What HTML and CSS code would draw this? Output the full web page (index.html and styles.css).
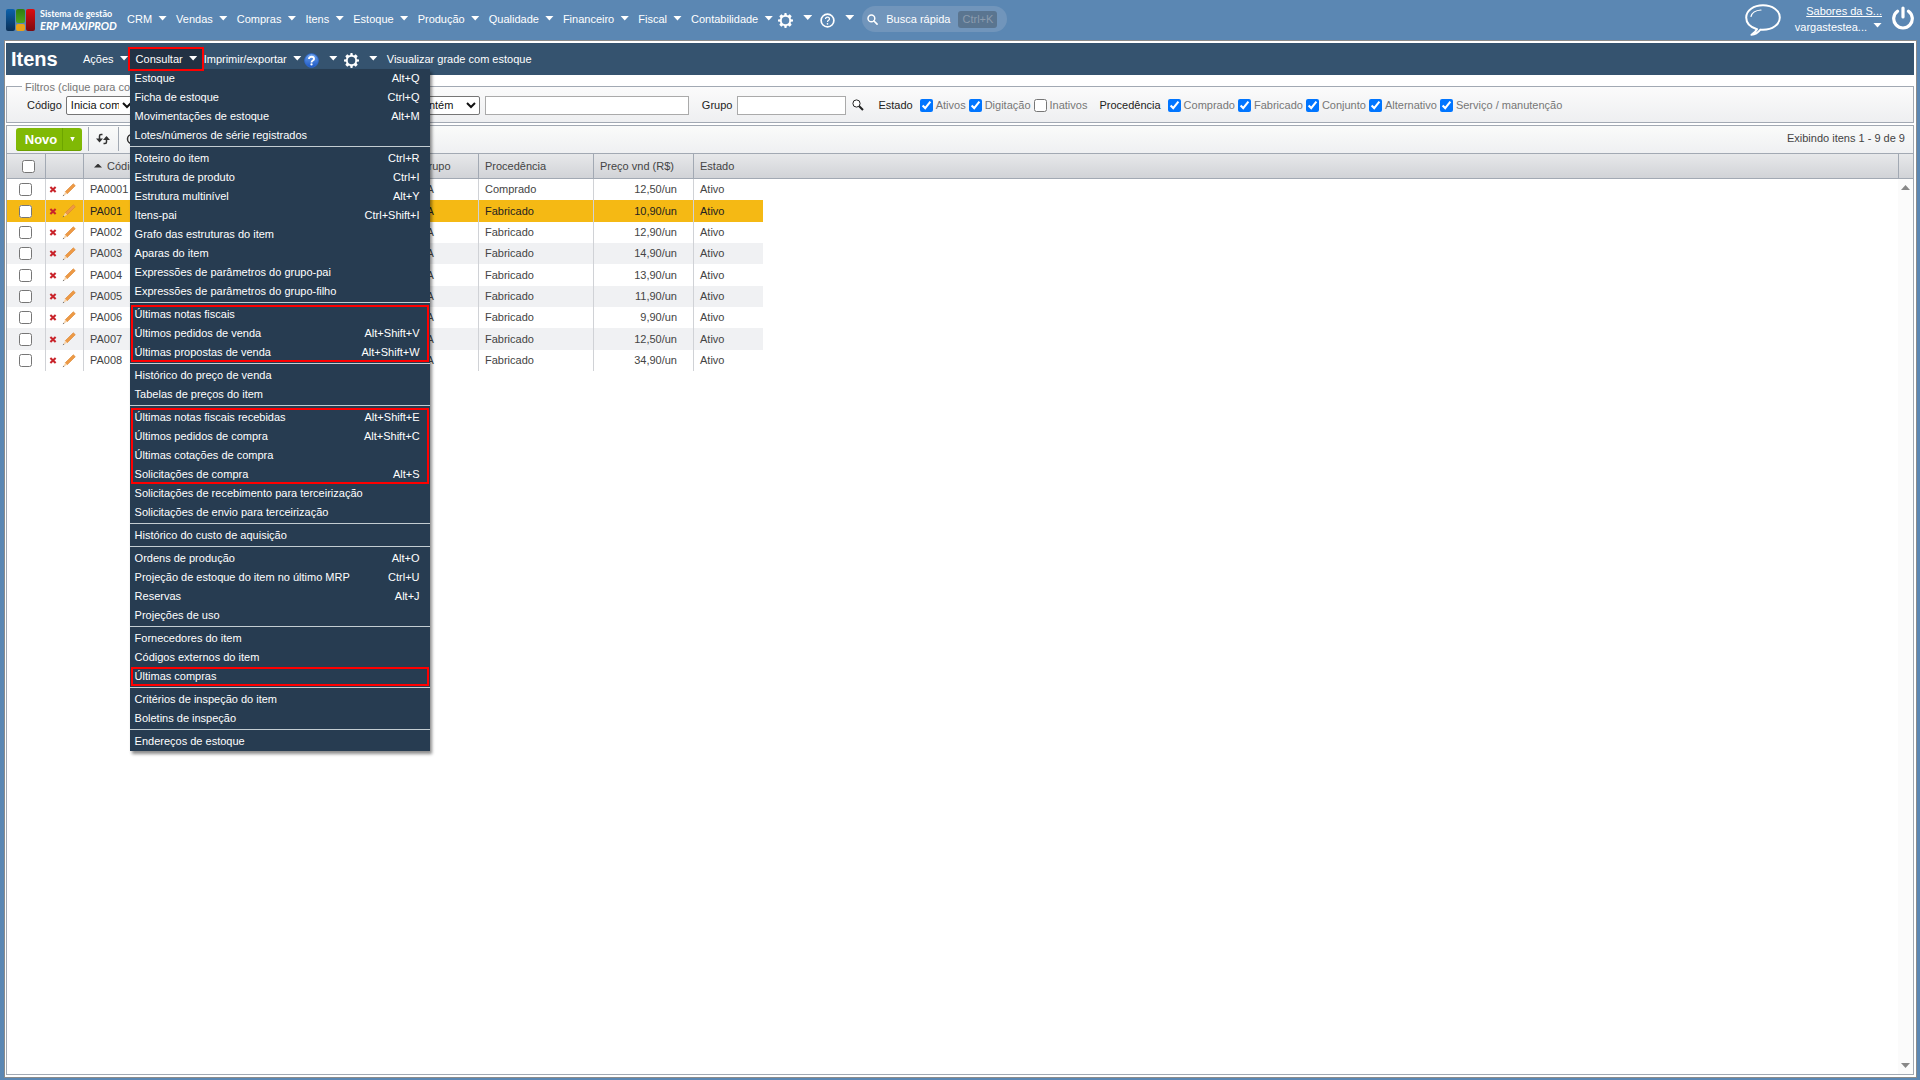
FILE: index.html
```html
<!DOCTYPE html>
<html lang="pt-BR">
<head>
<meta charset="utf-8">
<meta name="viewport" content="width=device-width, initial-scale=1">
<title>Itens - ERP MAXIPROD</title>
<link rel="stylesheet" href="styles.css">
</head>
<body>
<svg class="sprite" aria-hidden="true">
  <symbol id="gear" viewBox="0 0 16 16">
    <path fill="currentColor" fill-rule="evenodd" d="M7 0h2l.4 2.1 1.3.5L12.500 1.400l2.100 2.100-1.200 1.800.5 1.300L16 7v2l-2.100.4-.5 1.300 1.200 1.800-2.100 2.100-1.800-1.200-1.300.5L9 16H7l-.4-2.100-1.300-.5-1.800 1.200-2.100-2.100 1.200-1.800-.5-1.300L0 9V7l2.100-.4.5-1.300L1.400 3.500l2.100-2.100 1.800 1.200 1.300-.5zM8 4a4 4 0 1 0 0 8 4 4 0 0 0 0-8z"/>
  </symbol>
  <symbol id="delete" viewBox="0 0 8 8">
    <path stroke="#c9242b" stroke-width="2.400" d="M1 1.200l6 5.600M7 1.200L1 6.800"/>
  </symbol>
  <symbol id="pencil" viewBox="0 0 14 14">
    <path fill="#ee9a45" stroke="#d98331" stroke-width=".6" d="M11.300.8L3.200 8.800l2 2L13.300 2.700z"/>
    <path fill="#f6d2a8" d="M3.200 8.800L1 13l4.200-2.200z"/>
    <path fill="#555" d="M1.600 11.700L.7 13.300l1.700-.8z"/>
  </symbol>
</svg>

<header class="topbar">
  <a class="brand" href="#">
    <svg class="brand-mark" viewBox="0 0 30 22" aria-hidden="true">
      <defs>
        <linearGradient id="lb" x2="0" y2="1"><stop stop-color="#0b62ad"/><stop offset="1" stop-color="#0a2f57"/></linearGradient>
        <linearGradient id="lg" x2="0" y2="1"><stop stop-color="#2f7d12"/><stop offset="1" stop-color="#4ba51c"/></linearGradient>
        <linearGradient id="lr" x2="0" y2="1"><stop stop-color="#dd0c10"/><stop offset="1" stop-color="#7c0a10"/></linearGradient>
      </defs>
      <rect width="9" height="22" rx="2" fill="url(#lb)"/>
      <rect x="10" width="9" height="14" rx="2" fill="url(#lg)"/>
      <rect x="10" y="15" width="9" height="7" rx="2" fill="#e9a21a"/>
      <rect x="20" width="9" height="22" rx="2" fill="url(#lr)"/>
    </svg>
    <span class="brand-text"><span>Sistema de gestão</span><em>ERP MAXIPROD</em></span>
  </a>
  <nav class="menu">
    <button class="menu-btn">CRM<i class="caret"></i></button>
    <button class="menu-btn">Vendas<i class="caret"></i></button>
    <button class="menu-btn">Compras<i class="caret"></i></button>
    <button class="menu-btn">Itens<i class="caret"></i></button>
    <button class="menu-btn">Estoque<i class="caret"></i></button>
    <button class="menu-btn">Produção<i class="caret"></i></button>
    <button class="menu-btn">Qualidade<i class="caret"></i></button>
    <button class="menu-btn">Financeiro<i class="caret"></i></button>
    <button class="menu-btn">Fiscal<i class="caret"></i></button>
    <button class="menu-btn">Contabilidade<i class="caret"></i></button>
  </nav>
  <div class="tools">
    <button class="menu-btn icon-btn" aria-label="Configurações"><svg class="icon"><use href="#gear"/></svg><i class="caret"></i></button>
    <button class="menu-btn icon-btn" aria-label="Ajuda"><svg class="icon" viewBox="0 0 16 16"><circle cx="8" cy="8" r="6.800" fill="none" stroke="#fff" stroke-width="1.800"/><path fill="none" stroke="#fff" stroke-width="1.300" d="M5.900 6.400c0-2.700 4.200-2.700 4.200 0C10.100 7.900 8 7.800 8 9.600"/><circle cx="8" cy="11.500" r=".9" fill="#fff"/></svg><i class="caret"></i></button>
  </div>
  <button class="search">
    <svg class="search-icon" viewBox="0 0 12 12" aria-hidden="true"><circle cx="4.800" cy="4.800" r="3.700" fill="none" stroke="#fff" stroke-width="1.600"/><path stroke="#fff" stroke-width="1.800" stroke-linecap="round" d="M7.600 7.600L11 11"/></svg>
    <span>Busca rápida</span><kbd>Ctrl+K</kbd>
  </button>
  <div class="account">
    <svg class="chat" viewBox="0 0 36 32" aria-hidden="true">
      <path fill="none" stroke="#fff" stroke-width="2" stroke-linejoin="round" d="M12 25.200C5.500 23.300 1.200 19 1.200 13.500 1.200 6.500 8.700 1.200 18 1.200s16.800 5.300 16.800 12.300S27.300 25.800 18 25.800c-.9 0-1.800 0-2.600-.2-2 2.500-5 4.800-8.900 5.200 2.600-1.700 4.300-3.300 5.500-5.600z"/>
      <path fill="none" stroke="#fff" stroke-width="1.200" stroke-linecap="round" d="M6 12.500c1-3.800 5-6.200 10-6.500"/>
    </svg>
    <div class="who">
      <a href="#">Sabores da S...</a>
      <button class="menu-btn">vargastestea...<i class="caret"></i></button>
    </div>
    <button class="power" aria-label="Sair"><svg viewBox="0 0 22 24"><path fill="none" stroke="#fff" stroke-width="3.200" stroke-linecap="round" d="M11 2v9M5.500 5.200a9.300 9.300 0 1 0 11 0"/></svg></button>
  </div>
</header>

<main class="frame">
  <div class="actionbar">
    <h1>Itens</h1>
    <button class="menu-btn">Ações<i class="caret"></i></button>
    <div class="dropdown">
      <button class="menu-btn open" aria-expanded="true">Consultar<i class="caret"></i></button>
      <div class="panel">
        <div class="group">
          <a href="#">Estoque<span>Alt+Q</span></a>
          <a href="#">Ficha de estoque<span>Ctrl+Q</span></a>
          <a href="#">Movimentações de estoque<span>Alt+M</span></a>
          <a href="#">Lotes/números de série registrados</a>
        </div>
        <div class="group">
          <a href="#">Roteiro do item<span>Ctrl+R</span></a>
          <a href="#">Estrutura de produto<span>Ctrl+I</span></a>
          <a href="#">Estrutura multinível<span>Alt+Y</span></a>
          <a href="#">Itens-pai<span>Ctrl+Shift+I</span></a>
          <a href="#">Grafo das estruturas do item</a>
          <a href="#">Aparas do item</a>
          <a href="#">Expressões de parâmetros do grupo-pai</a>
          <a href="#">Expressões de parâmetros do grupo-filho</a>
        </div>
        <div class="group">
          <div class="marked">
            <a href="#">Últimas notas fiscais</a>
            <a href="#">Últimos pedidos de venda<span>Alt+Shift+V</span></a>
            <a href="#">Últimas propostas de venda<span>Alt+Shift+W</span></a>
          </div>
        </div>
        <div class="group">
          <a href="#">Histórico do preço de venda</a>
          <a href="#">Tabelas de preços do item</a>
        </div>
        <div class="group">
          <div class="marked">
            <a href="#">Últimas notas fiscais recebidas<span>Alt+Shift+E</span></a>
            <a href="#">Últimos pedidos de compra<span>Alt+Shift+C</span></a>
            <a href="#">Últimas cotações de compra</a>
            <a href="#">Solicitações de compra<span>Alt+S</span></a>
          </div>
          <a href="#">Solicitações de recebimento para terceirização</a>
          <a href="#">Solicitações de envio para terceirização</a>
        </div>
        <div class="group">
          <a href="#">Histórico do custo de aquisição</a>
        </div>
        <div class="group">
          <a href="#">Ordens de produção<span>Alt+O</span></a>
          <a href="#">Projeção de estoque do item no último MRP<span>Ctrl+U</span></a>
          <a href="#">Reservas<span>Alt+J</span></a>
          <a href="#">Projeções de uso</a>
        </div>
        <div class="group">
          <a href="#">Fornecedores do item</a>
          <a href="#">Códigos externos do item</a>
          <div class="marked">
            <a href="#">Últimas compras</a>
          </div>
        </div>
        <div class="group">
          <a href="#">Critérios de inspeção do item</a>
          <a href="#">Boletins de inspeção</a>
        </div>
        <div class="group">
          <a href="#">Endereços de estoque</a>
        </div>
      </div>
    </div>
    <button class="menu-btn">Imprimir/exportar<i class="caret"></i></button>
    <button class="menu-btn icon-btn" aria-label="Ajuda"><svg class="icon" viewBox="0 0 16 16"><defs><linearGradient id="hb" x2="0" y2="1"><stop stop-color="#6fa6ee"/><stop offset="1" stop-color="#1c56c4"/></linearGradient></defs><circle cx="8" cy="8" r="7.300" fill="url(#hb)" stroke="#2f6ad0"/><path fill="none" stroke="#fff" stroke-width="2" d="M5.300 6.300c0-3.200 5.400-3.100 5.400 0C10.700 8 8 8 8 10"/><circle cx="8" cy="12.200" r="1.200" fill="#fff"/></svg><i class="caret"></i></button>
    <button class="menu-btn icon-btn" aria-label="Opções"><svg class="icon"><use href="#gear"/></svg><i class="caret"></i></button>
    <button class="menu-btn view">Visualizar grade com estoque</button>
  </div>

  <fieldset class="filters">
    <legend>Filtros (clique para contrair)</legend>
    <div class="filter-row">
      <label for="codigo-op">Código</label>
      <select id="codigo-op" class="op"><option>Inicia com</option></select>
      <input class="code-input" type="text" aria-label="Código">
      <select class="op" aria-label="Operador da descrição"><option>Contém</option></select>
      <input class="desc-input" type="text" aria-label="Descrição">
      <label class="group-label" for="grupo">Grupo</label>
      <input id="grupo" class="group-input" type="text">
      <button class="lookup" aria-label="Buscar grupo"><svg viewBox="0 0 12 12"><circle cx="4.500" cy="4.500" r="3.600" fill="#fff" stroke="#222"/><path stroke="#222" stroke-width="2" d="M7.200 7.200L11 11"/></svg></button>
      <div class="checks">
        <b>Estado</b>
        <label><input type="checkbox" checked>Ativos</label>
        <label><input type="checkbox" checked>Digitação</label>
        <label><input type="checkbox">Inativos</label>
      </div>
      <div class="checks">
        <b>Procedência</b>
        <label><input type="checkbox" checked>Comprado</label>
        <label><input type="checkbox" checked>Fabricado</label>
        <label><input type="checkbox" checked>Conjunto</label>
        <label><input type="checkbox" checked>Alternativo</label>
        <label><input type="checkbox" checked>Serviço / manutenção</label>
      </div>
    </div>
  </fieldset>

  <section class="grid">
    <div class="toolbar">
      <div class="split"><button class="new">Novo</button><button class="new-more" aria-label="Mais opções"><i></i></button></div>
      <button class="tool" aria-label="Atualizar"><svg viewBox="0 0 14 12"><path fill="none" stroke="#333" stroke-width="1.500" d="M6.500 1.500H5a1.500 1.500 0 0 0-1.500 1.500v5M7.500 10.500H9A1.500 1.500 0 0 0 10.500 9V4"/><path fill="#333" d="M0 5h7L3.500 9zM7 6.500h7L10.500 2.500z" transform="translate(0 .5)"/></svg></button>
      <button class="tool" aria-label="Consultar"><svg viewBox="0 0 14 12"><circle cx="6" cy="6" r="4.500" fill="none" stroke="#333" stroke-width="1.500"/></svg></button>
      <span class="count">Exibindo itens 1 - 9 de 9</span>
    </div>
    <div class="grid-area">
      <table>
        <colgroup><col class="c-check"><col class="c-act"><col class="c-code"><col class="c-desc"><col class="c-group"><col class="c-proc"><col class="c-price"><col class="c-state"></colgroup>
        <thead>
          <tr><th class="check"><input type="checkbox" aria-label="Selecionar todos"></th><th></th><th><i class="sort"></i>Código</th><th></th><th>Grupo</th><th>Procedência</th><th>Preço vnd (R$)</th><th>Estado</th></tr>
        </thead>
        <tbody>
          <tr><td class="check"><input type="checkbox" aria-label="PA0001"></td><td class="acts"><svg class="del"><use href="#delete"/></svg><svg class="edit"><use href="#pencil"/></svg></td><td>PA0001</td><td></td><td>PA</td><td>Comprado</td><td class="num">12,50/un</td><td>Ativo</td></tr>
          <tr class="selected"><td class="check"><input type="checkbox" aria-label="PA001"></td><td class="acts"><svg class="del"><use href="#delete"/></svg><svg class="edit"><use href="#pencil"/></svg></td><td>PA001</td><td></td><td>PA</td><td>Fabricado</td><td class="num">10,90/un</td><td>Ativo</td></tr>
          <tr><td class="check"><input type="checkbox" aria-label="PA002"></td><td class="acts"><svg class="del"><use href="#delete"/></svg><svg class="edit"><use href="#pencil"/></svg></td><td>PA002</td><td></td><td>PA</td><td>Fabricado</td><td class="num">12,90/un</td><td>Ativo</td></tr>
          <tr><td class="check"><input type="checkbox" aria-label="PA003"></td><td class="acts"><svg class="del"><use href="#delete"/></svg><svg class="edit"><use href="#pencil"/></svg></td><td>PA003</td><td></td><td>PA</td><td>Fabricado</td><td class="num">14,90/un</td><td>Ativo</td></tr>
          <tr><td class="check"><input type="checkbox" aria-label="PA004"></td><td class="acts"><svg class="del"><use href="#delete"/></svg><svg class="edit"><use href="#pencil"/></svg></td><td>PA004</td><td></td><td>PA</td><td>Fabricado</td><td class="num">13,90/un</td><td>Ativo</td></tr>
          <tr><td class="check"><input type="checkbox" aria-label="PA005"></td><td class="acts"><svg class="del"><use href="#delete"/></svg><svg class="edit"><use href="#pencil"/></svg></td><td>PA005</td><td></td><td>PA</td><td>Fabricado</td><td class="num">11,90/un</td><td>Ativo</td></tr>
          <tr><td class="check"><input type="checkbox" aria-label="PA006"></td><td class="acts"><svg class="del"><use href="#delete"/></svg><svg class="edit"><use href="#pencil"/></svg></td><td>PA006</td><td></td><td>PA</td><td>Fabricado</td><td class="num">9,90/un</td><td>Ativo</td></tr>
          <tr><td class="check"><input type="checkbox" aria-label="PA007"></td><td class="acts"><svg class="del"><use href="#delete"/></svg><svg class="edit"><use href="#pencil"/></svg></td><td>PA007</td><td></td><td>PA</td><td>Fabricado</td><td class="num">12,50/un</td><td>Ativo</td></tr>
          <tr><td class="check"><input type="checkbox" aria-label="PA008"></td><td class="acts"><svg class="del"><use href="#delete"/></svg><svg class="edit"><use href="#pencil"/></svg></td><td>PA008</td><td></td><td>PA</td><td>Fabricado</td><td class="num">34,90/un</td><td>Ativo</td></tr>
        </tbody>
      </table>
      <div class="rest"><div class="head-fill"></div></div>
      <div class="scroll">
        <div class="head-fill"></div>
        <div class="track"><i class="up"></i><i class="down"></i></div>
      </div>
    </div>
  </section>
</main>
</body>
</html>
```
FILE: styles.css
```css
* { box-sizing: border-box; }

body {
  margin: 0;
  min-height: 100vh;
  padding: 0 3px 2px 4px;
  display: flex;
  flex-direction: column;
  background: #5b87b3;
  color: #444;
  font: 11px/13px "Liberation Sans", Arial, sans-serif;
}

button, input, select { font: inherit; color: inherit; }
button { border: 0; padding: 0; background: none; cursor: pointer; }
a { color: inherit; text-decoration: none; }
input[type="checkbox"] { width: 13px; height: 13px; margin: 0; }
.sprite { display: none; }

.caret {
  width: 9px;
  height: 5px;
  margin-bottom: 2px;
  background: #fff;
  clip-path: polygon(0 0, 100% 0, 50% 100%);
}

.menu-btn {
  display: flex;
  align-items: center;
  gap: 6px;
  color: #fff;
  white-space: nowrap;
}
.icon-btn { gap: 11px; }
.icon { width: 15px; height: 15px; color: #fff; }

/* Top bar */
.topbar {
  height: 40px;
  display: flex;
  align-items: center;
  padding-right: 3px;
  color: #fff;
}
.brand { display: flex; gap: 4px; width: 123px; padding-left: 2px; align-items: center; }
.brand-mark { width: 30px; height: 22px; }
.brand-text {
  display: flex;
  flex-direction: column;
  font: bold 9px/12px Lato, "Open Sans", sans-serif;
  white-space: nowrap;
}
.brand-text em { font-size: 11px; }
.menu { display: flex; gap: 9px; padding-bottom: 2px; }
.tools { display: flex; gap: 8px; padding: 1px 0 0 5px; }
.tools .icon-btn { gap: 10px; }
.tools .caret { margin-bottom: 6px; }
.search {
  display: flex;
  align-items: center;
  gap: 8px;
  height: 26px;
  margin-left: 8px;
  margin-bottom: 2px;
  padding: 0 10px 0 5px;
  border-radius: 13px;
  background: #7195bb;
  color: #fff;
}
.search-icon { width: 11px; height: 11px; }
.search kbd {
  padding: 2px 4px;
  border-radius: 3px;
  background: #5a7590;
  color: #8c9cae;
  font: inherit;
}
.account { display: flex; align-items: center; margin-left: auto; }
.chat { width: 36px; height: 32px; }
.who { display: flex; flex-direction: column; align-items: flex-end; gap: 3px; margin: 0 10px 2px 14px; }
.who a { text-decoration: underline; }
.who .caret { margin-bottom: 4px; }
.power svg { display: block; width: 22px; height: 24px; }
.power { margin-bottom: 4px; }

/* Page frame */
.frame {
  flex: 1;
  display: flex;
  flex-direction: column;
  padding: 2px 2px 2px 1px;
  border: 1px solid #8b8b8b;
  background: #fff;
}

.actionbar {
  display: flex;
  align-items: center;
  height: 32px;
  padding: 0 5px;
  background: #35536f;
}
.actionbar h1 { width: 72px; margin: 0; color: #fff; font-size: 20px; line-height: 24px; }
.actionbar .icon-btn { gap: 10px; margin-right: 6px; }
.actionbar .icon-btn .icon { margin-top: 3px; }
.actionbar .view { margin-left: 3px; }

.dropdown { position: relative; margin: 0 2px 0 1px; }
.dropdown + .menu-btn { margin-right: 2px; }
.dropdown .open {
  position: relative;
  z-index: 2;
  height: 20px;
  padding: 0 4px 0 6px;
  background: #223143;
  outline: 2px solid #f00;
}
.panel {
  position: absolute;
  z-index: 1;
  top: 100%;
  left: 0;
  width: 300px;
  background: #273c51;
  box-shadow: 2px 3px 3px rgba(0, 0, 0, .45);
}
.group + .group { margin-top: 1px; padding-top: 2px; border-top: 1px solid #c3cdd2; }
.panel a {
  display: flex;
  justify-content: space-between;
  padding: 0 10px 0 5px;
  color: #fff;
  line-height: 19px;
}
.marked { position: relative; }
.marked::after {
  content: "";
  position: absolute;
  inset: 0 1px;
  border: 2px solid #f00;
  pointer-events: none;
}

/* Filters */
.filters {
  min-width: 0;
  margin: 4px 0 2px;
  padding: 0 16px 6px 20px;
  border: 1px solid #a2a9b3;
  background: linear-gradient(#fbfbfb, #eeeff1);
}
.filters legend { margin-left: -5px; padding: 2px 3px 0; color: #777; }
.filter-row { display: flex; align-items: center; height: 22px; color: #222; }
.filters select {
  height: 19px;
  border: 1px solid #767676;
  border-radius: 2px;
  background: #fff;
  color: #111;
}
.op { width: 70px; margin-left: 4px; }
.filters input[type="text"] { height: 19px; border: 1px solid #aaa; background: #fff; }
.code-input { width: 266px; margin-left: 4px; }
.desc-input { width: 204px; margin-left: 5px; }
.group-label { margin-left: 13px; }
.group-input { width: 109px; margin-left: 5px; }
.lookup { margin: 0 14px 0 6px; }
.lookup svg { display: block; width: 12px; height: 12px; }
.checks { display: flex; align-items: center; gap: 3px; margin-right: 12px; }
.checks b { margin-right: 4px; font-weight: normal; }
.checks label { display: flex; align-items: center; gap: 3px; color: #777; white-space: nowrap; }

/* Grid */
.grid {
  flex: 1;
  display: flex;
  flex-direction: column;
  border: 1px solid #a2a9b3;
}
.toolbar {
  display: flex;
  align-items: center;
  height: 28px;
  padding: 0 8px 1px 9px;
  border-bottom: 1px solid #a2a9b3;
  background: linear-gradient(#fafbfa, #eff0f2);
}
.split { display: flex; height: 23px; margin-right: 6px; border-radius: 3px; overflow: hidden; background: #80b905; box-shadow: inset 0 -1px #6ca000; }
.new { width: 47px; padding-left: 4px; border-right: 1px solid #6da500; color: #fff; font-size: 13px; font-weight: bold; }
.new-more { width: 19px; display: grid; place-items: center; }
.new-more i { width: 5px; height: 5px; background: #fff; clip-path: polygon(0 0, 100% 0, 50% 100%); }
.tool { width: 30px; height: 24px; border-left: 1px solid #a2a9b3; }
.tool svg { display: block; width: 14px; height: 12px; margin-left: 7px; }
.count { margin-left: auto; padding-bottom: 2px; }

.grid-area { flex: 1; display: flex; }
table { align-self: flex-start; width: 756px; table-layout: fixed; border-collapse: separate; border-spacing: 0; }
.c-check { width: 39px; }
.c-act { width: 38px; }
.c-code { width: 90px; }
.c-desc { width: 240px; }
.c-group { width: 65px; }
.c-proc { width: 115px; }
.c-price { width: 100px; }
th, td { padding: 0 6px; text-align: left; font-weight: normal; white-space: nowrap; overflow: hidden; }
th, .head-fill {
  height: 25px;
  border-bottom: 1px solid #a2a9b3;
  background: linear-gradient(#e7e8ea, #d1d3d7);
}
th:not(:last-child) { border-right: 1px solid #a2a9b3; }
td { border-right: 1px solid #d0d2d6; }
td:last-child { border-right: 0; }
tbody tr { height: 21px; }
tbody tr:nth-child(3n+2) { height: 22px; }
tbody tr:nth-child(even) { background: #f0f1f3; }
tbody tr.selected { background: #f5b914; color: #222; }
.check { padding: 0 12px; }
th.check { padding-left: 15px; }
.check input { display: block; }
.num { padding-right: 16px; text-align: right; }
.acts { padding: 0 3px; }
.acts svg { display: inline-block; vertical-align: middle; }
.del { width: 8px; height: 7px; margin-right: 5px; }
.edit { width: 14px; height: 14px; }
.sort { display: inline-block; width: 8px; height: 4px; margin: 0 5px 2px 4px; background: #333; clip-path: polygon(50% 0, 100% 100%, 0 100%); }
.rest { flex: 1; }
.scroll { width: 15px; display: flex; flex-direction: column; }
.scroll .head-fill { border-left: 1px solid #a2a9b3; }
.track { flex: 1; display: flex; flex-direction: column; justify-content: space-between; align-items: center; padding: 6px 0; background: #fbfbfb; }
.track i { width: 9px; height: 5px; background: #888; }
.up { clip-path: polygon(50% 0, 100% 100%, 0 100%); }
.down { clip-path: polygon(0 0, 100% 0, 50% 100%); }
```
